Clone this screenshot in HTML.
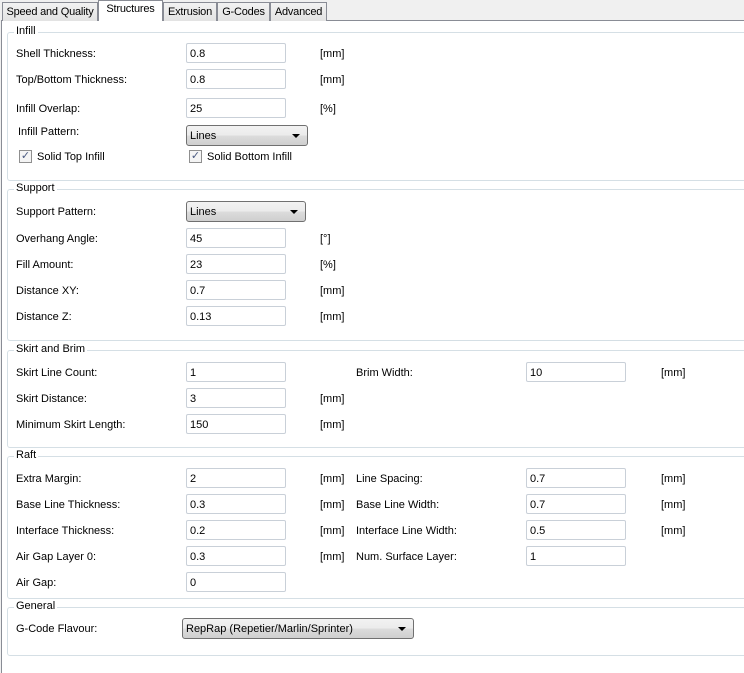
<!DOCTYPE html>
<html style="overflow:hidden;height:673px"><head><style>
*{box-sizing:border-box}
body{margin:0;width:744px;height:673px;background:#f0f0f0;font-family:"Liberation Sans",sans-serif;font-size:11px;color:#000;position:relative;overflow:hidden}
.panel{position:absolute;left:1px;top:20px;width:760px;height:660px;background:#fff;border:1px solid #898c95}
.tab{position:absolute;top:2px;height:19px;border:1px solid #898c95;border-bottom:none;background:linear-gradient(#f2f2f2,#e3e3e3);padding:3px 0 0 0;text-align:center;white-space:nowrap;font-size:11px;letter-spacing:-0.2px;overflow:hidden}
.tab.sel{top:0;height:21px;background:#fff;padding-top:2px;z-index:2}
.grp{position:absolute;left:7px;width:760px;border:1px solid #d5dfe5;border-radius:3px}
.gt{position:absolute;background:#fff;padding:0 2px;left:14px}
.l{position:absolute;left:16px;white-space:nowrap;margin-top:2px}
.in{position:absolute;width:100px;height:20px;border:1px solid #c9d0d8;border-radius:2px;background:#fff;padding:4px 0 0 3px}
.u{position:absolute;white-space:nowrap;margin-top:1px}
.sel2{position:absolute;height:21px;border:1px solid #707070;border-radius:3px;background:linear-gradient(#f2f2f2 0%,#ebebeb 50%,#dcdcdc 51%,#cfcfcf 100%);padding:4px 0 0 3px}
.sel2:after{content:"";position:absolute;right:7px;top:8px;border-left:4px solid transparent;border-right:4px solid transparent;border-top:4px solid #000}
.cb{position:absolute;width:13px;height:13px;border:1px solid #8f8f8f;background:#f4f4f4;font-size:11px;line-height:11px;text-align:center;color:#4a5a80}
</style></head><body>
<div class="panel"></div>
<div class="tab" style="left:2px;width:96px">Speed and Quality</div>
<div class="tab sel" style="left:98px;width:65px">Structures</div>
<div class="tab" style="left:163px;width:54px">Extrusion</div>
<div class="tab" style="left:217px;width:53px">G-Codes</div>
<div class="tab" style="left:270px;width:57px">Advanced</div>

<div class="grp" style="top:32px;height:149px"></div><div class="gt" style="top:25px">Infill</div>
<div class="grp" style="top:189px;height:152px"></div><div class="gt" style="top:182px">Support</div>
<div class="grp" style="top:350px;height:98px"></div><div class="gt" style="top:343px">Skirt and Brim</div>
<div class="grp" style="top:456px;height:143px"></div><div class="gt" style="top:449px">Raft</div>
<div class="grp" style="top:607px;height:49px"></div><div class="gt" style="top:600px">General</div>

<div class="l" style="top:46px">Shell Thickness:</div><div class="in" style="left:186px;top:43px">0.8</div><div class="u" style="left:320px;top:47px">[mm]</div>
<div class="l" style="top:72px">Top/Bottom Thickness:</div><div class="in" style="left:186px;top:69px">0.8</div><div class="u" style="left:320px;top:73px">[mm]</div>
<div class="l" style="top:101px">Infill Overlap:</div><div class="in" style="left:186px;top:98px">25</div><div class="u" style="left:320px;top:102px">[%]</div>
<div class="l" style="top:124px;left:18px">Infill Pattern:</div><div class="sel2" style="left:186px;top:125px;width:122px">Lines</div>
<div class="cb" style="left:19px;top:150px">✓</div><div class="l" style="left:37px;top:149px">Solid Top Infill</div>
<div class="cb" style="left:189px;top:150px">✓</div><div class="l" style="left:207px;top:149px">Solid Bottom Infill</div>

<div class="l" style="top:204px">Support Pattern:</div><div class="sel2" style="left:186px;top:201px;width:120px">Lines</div>
<div class="l" style="top:231px">Overhang Angle:</div><div class="in" style="left:186px;top:228px">45</div><div class="u" style="left:320px;top:232px">[°]</div>
<div class="l" style="top:257px">Fill Amount:</div><div class="in" style="left:186px;top:254px">23</div><div class="u" style="left:320px;top:258px">[%]</div>
<div class="l" style="top:283px">Distance XY:</div><div class="in" style="left:186px;top:280px">0.7</div><div class="u" style="left:320px;top:284px">[mm]</div>
<div class="l" style="top:309px">Distance Z:</div><div class="in" style="left:186px;top:306px">0.13</div><div class="u" style="left:320px;top:310px">[mm]</div>

<div class="l" style="top:365px">Skirt Line Count:</div><div class="in" style="left:186px;top:362px">1</div>
<div class="u" style="left:356px;top:366px">Brim Width:</div><div class="in" style="left:526px;top:362px">10</div><div class="u" style="left:661px;top:366px">[mm]</div>
<div class="l" style="top:391px">Skirt Distance:</div><div class="in" style="left:186px;top:388px">3</div><div class="u" style="left:320px;top:392px">[mm]</div>
<div class="l" style="top:417px">Minimum Skirt Length:</div><div class="in" style="left:186px;top:414px">150</div><div class="u" style="left:320px;top:418px">[mm]</div>

<div class="l" style="top:471px">Extra Margin:</div><div class="in" style="left:186px;top:468px">2</div><div class="u" style="left:320px;top:472px">[mm]</div>
<div class="u" style="left:356px;top:472px">Line Spacing:</div><div class="in" style="left:526px;top:468px">0.7</div><div class="u" style="left:661px;top:472px">[mm]</div>
<div class="l" style="top:497px">Base Line Thickness:</div><div class="in" style="left:186px;top:494px">0.3</div><div class="u" style="left:320px;top:498px">[mm]</div>
<div class="u" style="left:356px;top:498px">Base Line Width:</div><div class="in" style="left:526px;top:494px">0.7</div><div class="u" style="left:661px;top:498px">[mm]</div>
<div class="l" style="top:523px">Interface Thickness:</div><div class="in" style="left:186px;top:520px">0.2</div><div class="u" style="left:320px;top:524px">[mm]</div>
<div class="u" style="left:356px;top:524px">Interface Line Width:</div><div class="in" style="left:526px;top:520px">0.5</div><div class="u" style="left:661px;top:524px">[mm]</div>
<div class="l" style="top:549px">Air Gap Layer 0:</div><div class="in" style="left:186px;top:546px">0.3</div><div class="u" style="left:320px;top:550px">[mm]</div>
<div class="u" style="left:356px;top:550px">Num. Surface Layer:</div><div class="in" style="left:526px;top:546px">1</div>
<div class="l" style="top:575px">Air Gap:</div><div class="in" style="left:186px;top:572px">0</div>

<div class="l" style="top:621px">G-Code Flavour:</div><div class="sel2" style="left:182px;top:618px;width:232px">RepRap (Repetier/Marlin/Sprinter)</div>
</body></html>
